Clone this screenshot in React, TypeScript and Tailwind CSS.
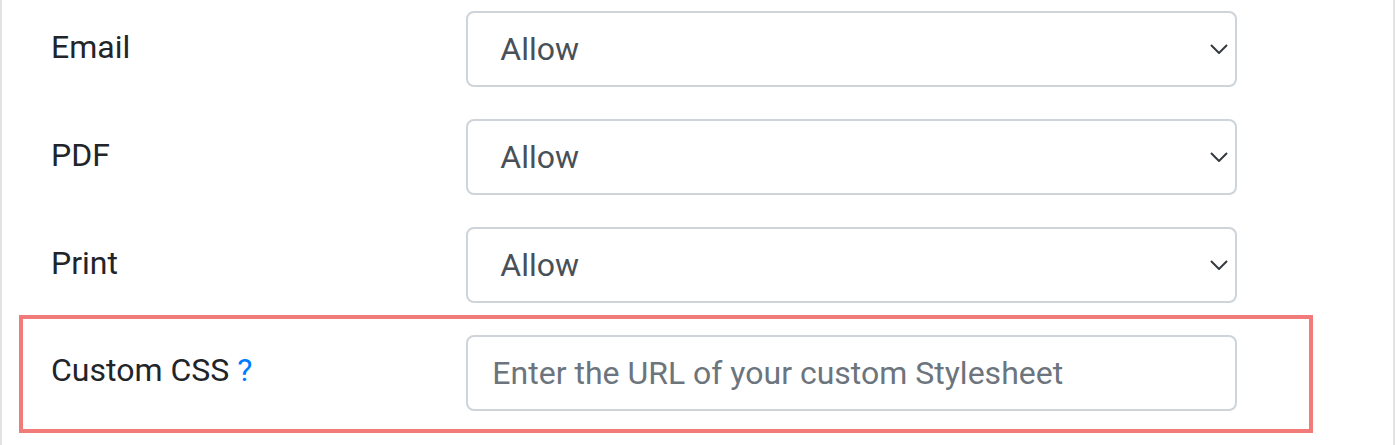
const FONT = { fontFamily: "Roboto, 'Noto Sans', sans-serif" };

function Chevron() {
  return (
    <svg
      width="18"
      height="10"
      viewBox="0 0 18 10"
      fill="none"
      className="pointer-events-none absolute top-1/2 right-[9px] -translate-y-1/2"
    >
      <path d="M1 1l8 8 8-8" stroke="#343a40" strokeWidth="2" />
    </svg>
  );
}

function SelectRow({ label }: { label: string }) {
  return (
    <div className="mb-[32px] grid w-[1246px] grid-cols-3">
      <label className="flex items-center px-[30px] pb-[5px] text-[32px] leading-[48px] text-[#212529]">
        {label}
      </label>
      <div className="col-span-2 px-[30px]">
        <div className="relative">
          <select
            defaultValue="allow"
            className="h-[76px] w-full appearance-none rounded-[8px] border-2 border-[#ced4da] bg-white pr-[48px] pl-[32px] text-[32px] text-[#495057] outline-none"
            style={FONT}
          >
            <option value="allow">Allow</option>
            <option value="deny">Deny</option>
          </select>
          <Chevron />
        </div>
      </div>
    </div>
  );
}

export default function App() {
  return (
    <div className="h-[445px] w-[1396px] overflow-hidden bg-white" style={FONT}>
      <div className="h-full w-[1395px] border-r-2 border-l-2 border-[#e2e2e2] pt-[11px] pl-[19px]">
        <SelectRow label="Email" />
        <SelectRow label="PDF" />
        <div className="-mb-[20px]">
          <SelectRow label="Print" />
        </div>
        <div className="-ml-[2px] w-[1294px] border-4 border-[#f07b78] pt-[16px] pb-[18px]">
          <div className="-ml-[2px] grid w-[1246px] grid-cols-3">
            <label className="flex items-center px-[30px] pb-[6px] text-[32px] leading-[48px] text-[#212529]">
              Custom CSS
              <span className="ml-[8px] text-[#007bff]">?</span>
            </label>
            <div className="col-span-2 px-[30px]">
              <input
                type="text"
                placeholder="Enter the URL of your custom Stylesheet"
                className="h-[76px] w-full rounded-[8px] border-2 border-[#ced4da] bg-white px-[24px] text-[32px] text-[#495057] outline-none placeholder:text-[#6c757d]"
                style={FONT}
              />
            </div>
          </div>
        </div>
      </div>
    </div>
  );
}
